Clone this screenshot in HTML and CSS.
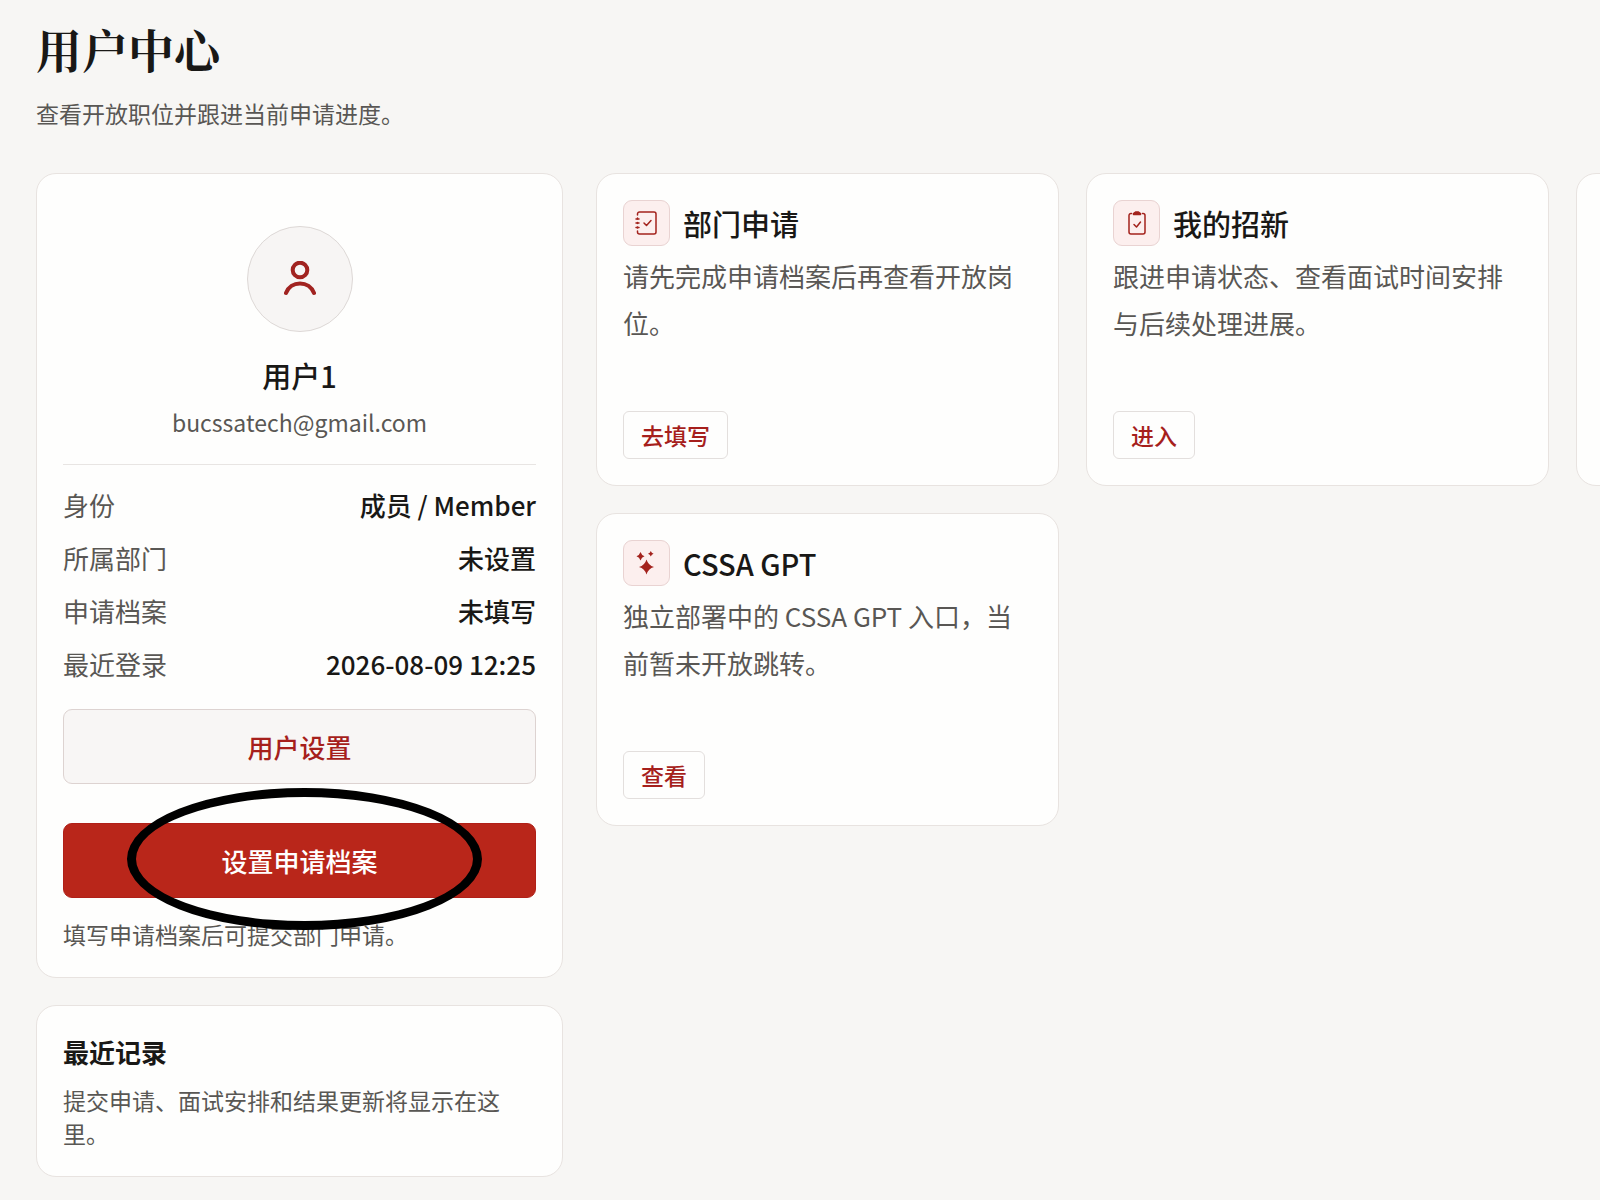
FILE: index.html
```html
<!DOCTYPE html>
<html lang="zh-CN">
<head>
  <meta charset="UTF-8">
  <meta name="viewport" content="width=device-width, initial-scale=1.0">
  <title>用户中心</title>
  <link rel="stylesheet" href="styles.css">
</head>
<body>
  <main class="page">
    <header class="page-header">
      <h1>用户中心</h1>
      <p>查看开放职位并跟进当前申请进度。</p>
    </header>

    <div class="layout">
      <aside class="sidebar">
        <section class="card profile">
          <div class="profile-top">
            <div class="avatar">
              <svg viewBox="0 0 32 36" fill="none" stroke="currentColor" stroke-width="4" stroke-linecap="round">
                <circle cx="16" cy="9" r="7.300"/>
                <path d="M2 32A15 15 0 0 1 30 32"/>
              </svg>
            </div>
            <h2>用户1</h2>
            <p class="email">bucssatech@gmail.com</p>
          </div>

          <dl class="info">
            <div><dt>身份</dt><dd>成员 / Member</dd></div>
            <div><dt>所属部门</dt><dd>未设置</dd></div>
            <div><dt>申请档案</dt><dd>未填写</dd></div>
            <div><dt>最近登录</dt><dd>2026-08-09 12:25</dd></div>
          </dl>

          <button class="btn btn-light" type="button">用户设置</button>
          <div class="highlight">
            <button class="btn btn-red" type="button">设置申请档案</button>
          </div>
          <p class="hint">填写申请档案后可提交部门申请。</p>
        </section>

        <section class="card records">
          <h3>最近记录</h3>
          <p>提交申请、面试安排和结果更新将显示在这里。</p>
        </section>
      </aside>

      <div class="modules">
        <article class="card module">
          <div class="module-title">
            <span class="icon">
              <svg viewBox="0 0 24 24" fill="none" stroke="currentColor" stroke-width="1.500" stroke-linecap="round" stroke-linejoin="round">
                <path d="M2.500 4V3a2 2 0 0 1 2-2h14.500a2 2 0 0 1 2 2v18a2 2 0 0 1-2 2H4.500a2 2 0 0 1-2-2v-1M2.500 7v1M2.500 11.500v1M2.500 16v1"/>
                <path d="M1 8h3M1 12h3M1 16.500h3M9 12l2.500 2.500 4.500-5"/>
              </svg>
            </span>
            <h2>部门申请</h2>
          </div>
          <p>请先完成申请档案后再查看开放岗位。</p>
          <button class="btn-small" type="button">去填写</button>
        </article>

        <article class="card module">
          <div class="module-title">
            <span class="icon">
              <svg viewBox="0 0 24 24" fill="none" stroke="currentColor" stroke-width="1.500" stroke-linecap="round" stroke-linejoin="round">
                <path d="M6.500 2.500H6a2 2 0 0 0-2 2V21a2 2 0 0 0 2 2h12a2 2 0 0 0 2-2V4.500a2 2 0 0 0-2-2h-.500M9 13.500l2.500 2.500 4-5"/>
                <path d="M8.500 3.500V2.500l2-1.500h3l2 1.500v1z" fill="currentColor"/>
              </svg>
            </span>
            <h2>我的招新</h2>
          </div>
          <p>跟进申请状态、查看面试时间安排与后续处理进展。</p>
          <button class="btn-small" type="button">进入</button>
        </article>

        <article class="card module"></article>

        <article class="card module">
          <div class="module-title">
            <span class="icon">
              <svg viewBox="0 0 24 24" fill="currentColor">
                <path d="M11.500 8.500Q13.200 14.300 19 16Q13.200 17.700 11.500 23.500Q9.800 17.700 4 16Q9.800 14.300 11.500 8.500z"/>
                <path d="M5.500 1Q6.500 4.200 9.500 5.200Q6.500 6.200 5.500 9.400Q4.500 6.200 1.500 5.200Q4.500 4.200 5.500 1z"/>
                <path d="M15.800 0Q16.500 2.200 18.600 2.800Q16.500 3.400 15.800 5.600Q15.100 3.400 13 2.800Q15.100 2.200 15.800 0z"/>
              </svg>
            </span>
            <h2>CSSA GPT</h2>
          </div>
          <p>独立部署中的 CSSA GPT 入口，当前暂未开放跳转。</p>
          <button class="btn-small" type="button">查看</button>
        </article>
      </div>
    </div>
  </main>
</body>
</html>
```
FILE: styles.css
```css
*,
*::after {
  box-sizing: border-box;
}

body {
  margin: 0;
  background: #f7f6f4;
  color: #191816;
  font-family: "Noto Sans CJK SC", sans-serif;
}

h1, h2, h3, p, dl, dd {
  margin: 0;
}

.page {
  padding: 18px 36px 20px;
  overflow: hidden;
}

.page-header {
  margin-bottom: 43px;
}

.page-header h1 {
  font-family: "Noto Serif CJK SC", "Noto Sans CJK SC", serif;
  font-size: 46px;
  line-height: 60px;
  font-weight: 700;
}

.page-header p {
  margin-top: 18px;
  font-size: 23px;
  line-height: 34px;
  color: #595754;
}

.layout {
  display: grid;
  grid-template-columns: calc(33vw - 1px) 1fr;
  gap: 33px;
  align-items: start;
}

.sidebar {
  display: grid;
  gap: 27px;
}

.card {
  background: #fefefd;
  border: 1px solid #e8e3e0;
  border-radius: 20px;
  padding: 26px;
}

/* profile */
.profile-top {
  display: flex;
  flex-direction: column;
  align-items: center;
  padding: 26px 0 22px;
  border-bottom: 1px solid #e8e5e3;
}

.avatar {
  display: flex;
  align-items: center;
  justify-content: center;
  width: 106px;
  height: 106px;
  margin-bottom: 21px;
  border: 1px solid #ddd8d6;
  border-radius: 50%;
  background: #f7f5f4;
  color: #a12320;
}

.avatar svg {
  width: 32px;
  height: 36px;
}

.profile-top h2 {
  font-size: 29px;
  line-height: 44px;
  font-weight: 500;
}

.email {
  margin-top: 6px;
  font-size: 23px;
  line-height: 39px;
  color: #595754;
}

.info {
  display: grid;
  gap: 14px;
  margin: 20px 0 26px;
  font-size: 26px;
  line-height: 39px;
}

.info div {
  display: flex;
  justify-content: space-between;
}

.info dt {
  color: #595754;
}

.info dd {
  font-weight: 500;
}

button {
  font-family: inherit;
  cursor: pointer;
}

.btn {
  display: block;
  width: 100%;
  height: 75px;
  border-radius: 9px;
  font-size: 26px;
  font-weight: 500;
}

.btn-light {
  background: #f8f6f5;
  border: 1px solid #ddd3d1;
  color: #a61f1c;
}

.btn-red {
  background: #b9261a;
  border: 1px solid #b02018;
  color: #fff;
}

.highlight {
  position: relative;
  margin-top: 39px;
}

/* hand drawn ring around the main action */
.highlight::after {
  content: "";
  position: absolute;
  top: -35px;
  left: 64px;
  right: 54px;
  height: 142px;
  border: 9px solid #000;
  border-radius: 50%;
  pointer-events: none;
}

.hint {
  margin-top: 20px;
  font-size: 23px;
  line-height: 33px;
  color: #595754;
}

/* records */
.records h3 {
  font-size: 26px;
  line-height: 39px;
  font-weight: 600;
}

.records p {
  margin-top: 13px;
  font-size: 23px;
  line-height: 33px;
  color: #595754;
}

/* modules */
.modules {
  display: grid;
  grid-template-columns: repeat(3, calc(29vw - 1px));
  grid-auto-rows: minmax(313px, auto);
  gap: 27px;
}

.module {
  display: flex;
  flex-direction: column;
  align-items: flex-start;
}

.module-title {
  display: flex;
  align-items: center;
  gap: 13px;
}

.module-title h2 {
  font-size: 29px;
  line-height: 46px;
  font-weight: 500;
}

.icon {
  display: flex;
  align-items: center;
  justify-content: center;
  width: 47px;
  height: 46px;
  border: 1px solid #e9d3d2;
  border-radius: 9px;
  background: #fcefee;
  color: #a3231d;
}

.icon svg {
  width: 24px;
  height: 24px;
}

.module p {
  margin-top: 6px;
  font-size: 26px;
  line-height: 47px;
  color: #595754;
}

.btn-small {
  height: 48px;
  margin-top: auto;
  padding: 0 17px;
  background: #fefefd;
  border: 1px solid #e3dfdd;
  border-radius: 6px;
  color: #a61f1c;
  font-size: 23px;
  font-weight: 500;
}
```
